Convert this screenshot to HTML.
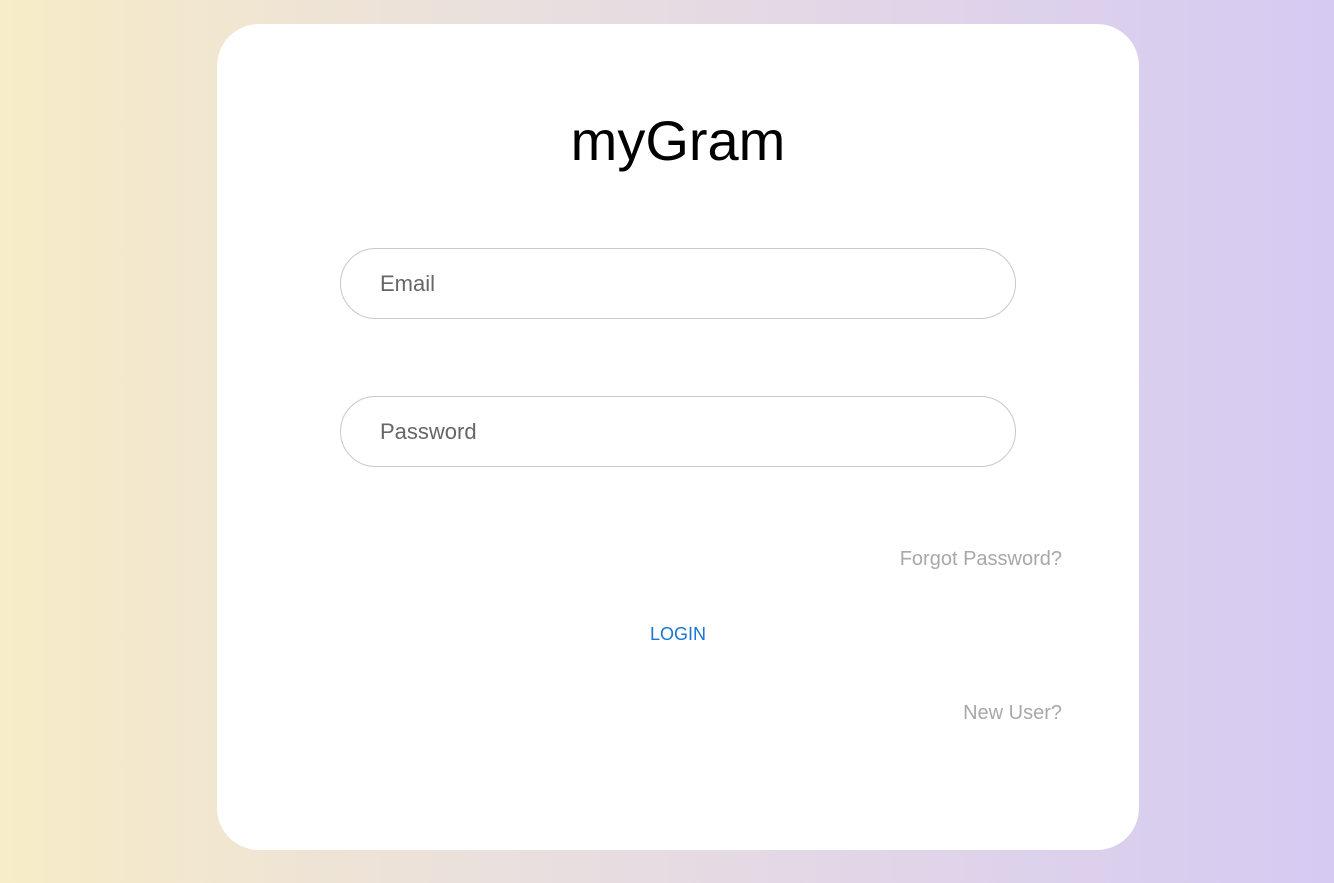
<!DOCTYPE html>
<html><head><style>
html,body{margin:0;padding:0;width:1334px;height:883px;overflow:hidden;}
body{background:linear-gradient(to right,#f7eec8 0%,#f5eac9 5%,#e9dfdf 40%,#d9cdef 90%,#d6caf3 100%);font-family:"Liberation Sans",sans-serif;position:relative;}
.card{position:absolute;left:217px;top:24px;width:922px;height:826px;background:#fff;border-radius:42px;}
.title{position:absolute;left:0;width:922px;top:82px;text-align:center;font-size:56px;color:#000;line-height:70px;}
.inp{position:absolute;left:123px;width:674px;height:69px;border:1px solid #c8c8c8;border-radius:36px;box-sizing:content-box;}
.inp span{position:absolute;left:39px;top:0;line-height:69px;font-size:22px;color:#666;}
.r{position:absolute;right:77px;font-size:20px;color:#a8a8a8;line-height:24px;}
.login{position:absolute;left:0;width:922px;text-align:center;top:600px;font-size:18px;color:#1976d2;line-height:20px;}
</style></head><body>
<div class="card">
<div class="title">myGram</div>
<div class="inp" style="top:224px"><span>Email</span></div>
<div class="inp" style="top:372px"><span>Password</span></div>
<div class="r" style="top:523px">Forgot Password?</div>
<div class="login">LOGIN</div>
<div class="r" style="top:677px">New User?</div>
</div>
</body></html>
